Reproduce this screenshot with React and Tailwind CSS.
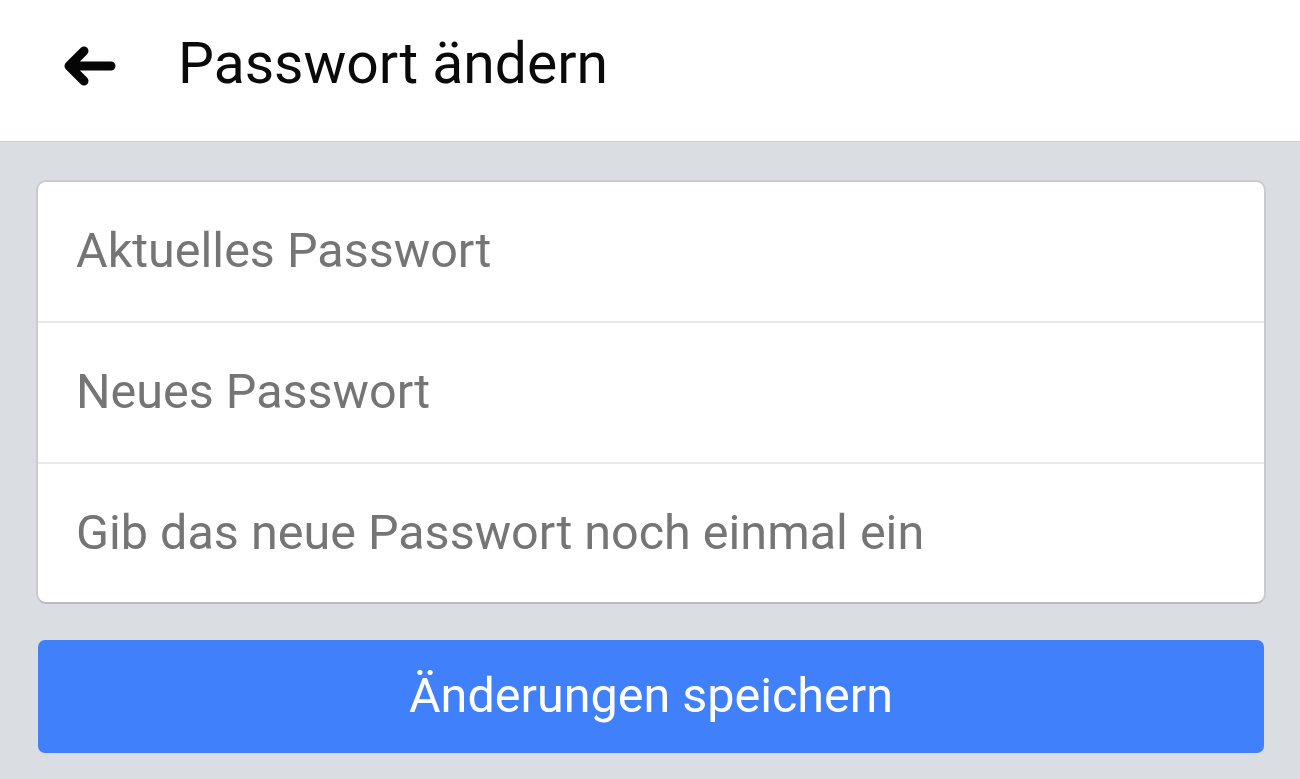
export default function App() {
  const rows = ["Aktuelles Passwort", "Neues Passwort", "Gib das neue Passwort noch einmal ein"];
  return (
    <div className="w-[1300px] h-[779px] bg-[#dadde1] overflow-hidden" style={{ fontFamily: "Roboto, 'Noto Sans', sans-serif" }}>
      <div className="h-[142px] bg-white border-b border-[#c8cbd0] flex items-center">
        <div className="w-[178px] flex items-center pl-[60px]">
          <svg width="58" height="44" viewBox="0 0 58 44" className="mt-[-10px]">
            <path d="M51 22 H10 M24 7 L9 22 L24 37" fill="none" stroke="#050505" strokeWidth="9" strokeLinecap="round" strokeLinejoin="round" />
          </svg>
        </div>
        <div className="text-[57px] leading-none text-[#0a0a0a] mt-[-14px]">Passwort ändern</div>
      </div>
      <div className="pt-[38px] pl-[36px] pr-[34px]">
        <div className="bg-white rounded-[10px] border-2 border-[#c9cbce] border-b-[#b9babd]">
          {rows.map((r, i) => (
            <div key={r} className={"flex items-center pl-[38px] " + (i < 2 ? "h-[141px] border-b-2 border-[#e6e7e9]" : "h-[138px]")}>
              <span className="text-[48.5px] text-[#757575] leading-none">{r}</span>
            </div>
          ))}
        </div>
        <div className="mt-[36px] mx-[2px] h-[113px] rounded-[7px] bg-[#4080fb] flex items-center justify-center">
          <span className="text-[48.5px] text-white leading-none">Änderungen speichern</span>
        </div>
      </div>
    </div>
  );
}
